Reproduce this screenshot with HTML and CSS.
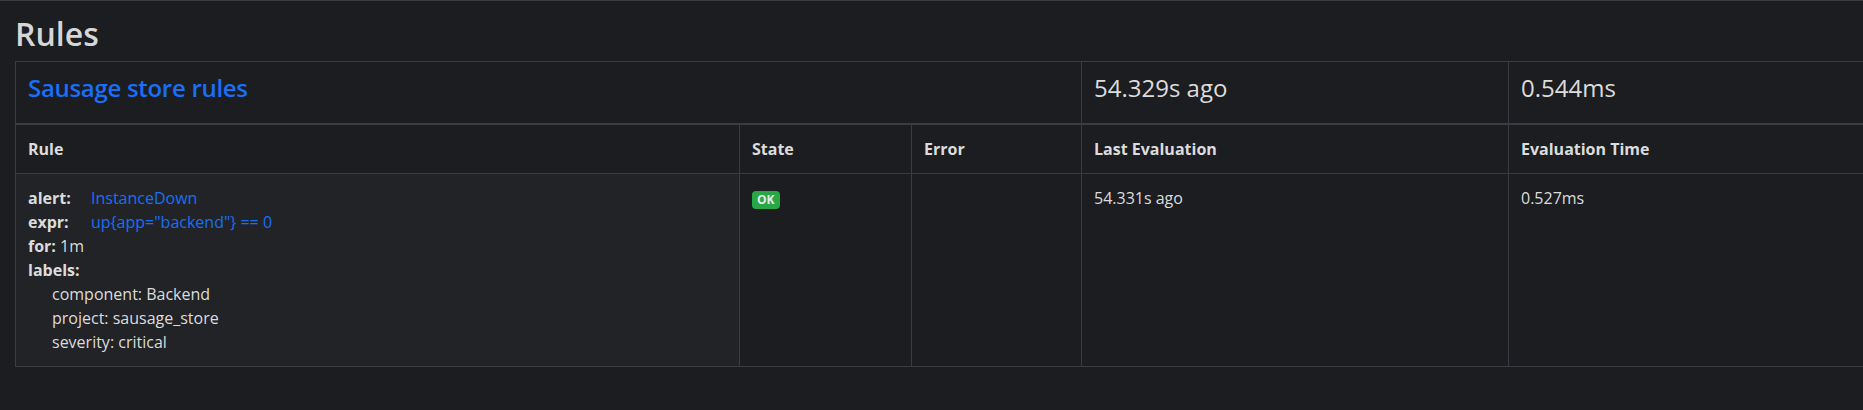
FILE: index.html
```html
<!DOCTYPE html>
<html lang="en">
<head>
<meta charset="utf-8">
<title>Rules</title>
<link rel="stylesheet" href="styles.css">
</head>
<body>
<div class="topbar"></div>
<main class="container">
  <h2 class="title">Rules</h2>
  <table class="rules">
    <colgroup>
      <col class="c-rule"><col class="c-state"><col class="c-error"><col class="c-last"><col class="c-time">
    </colgroup>
    <thead>
      <tr class="group-row">
        <td colspan="3"><h4 class="group-title"><a href="#" class="link group-link">Sausage store rules</a></h4></td>
        <td><h4 class="group-title">54.329s ago</h4></td>
        <td><h4 class="group-title">0.544ms</h4></td>
      </tr>
    </thead>
    <tbody>
      <tr class="head-row">
        <td>Rule</td>
        <td>State</td>
        <td>Error</td>
        <td>Last Evaluation</td>
        <td>Evaluation Time</td>
      </tr>
      <tr class="data-row">
        <td class="rule-cell">
          <div class="kv"><b class="key">alert:</b><a href="#" class="link">InstanceDown</a></div>
          <div class="kv"><b class="key">expr:</b><a href="#" class="link">up{app="backend"} == 0</a></div>
          <div><b>for:</b> 1m</div>
          <div><b>labels:</b></div>
          <div class="label">component: Backend</div>
          <div class="label">project: sausage_store</div>
          <div class="label">severity: critical</div>
        </td>
        <td><span class="badge">OK</span></td>
        <td></td>
        <td>54.331s ago</td>
        <td>0.527ms</td>
      </tr>
    </tbody>
  </table>
</main>
</body>
</html>
```

FILE: styles.css
```css
html, body {
  margin: 0;
  padding: 0;
  overflow: hidden;
  background: #1b1d21;
}
body {
  font-family: "Open Sans", "Noto Sans", sans-serif;
  font-size: 16px;
  line-height: 1.5;
  color: #dcdcdc;
  height: 410px;
}
.topbar {
  height: 1px;
  background: #3a3d42;
}
.container {
  padding: 14px 15px 0;
  width: 2000px;
}
.title {
  margin: 0 0 8px;
  font-size: 32px;
  font-weight: 560;
  line-height: 1.2;
  color: #d6d6d6;
}
.rules {
  border-collapse: collapse;
  table-layout: fixed;
  width: 1920px;
}
.c-rule { width: 724px; }
.c-state { width: 172px; }
.c-error { width: 170px; }
.c-last { width: 427px; }
.c-time { width: 427px; }
.rules td {
  border: 1px solid #3a3c41;
  padding: 12px;
  vertical-align: top;
  text-align: left;
}
.group-row td {
  border-bottom-width: 2px;
}
.group-title {
  margin: 0 0 8px;
  font-size: 24px;
  font-weight: 520;
  line-height: 1.2;
}
.group-link {
  font-weight: 580;
  letter-spacing: -0.3px;
}
.link {
  color: #1a6ff5;
  text-decoration: none;
}
.head-row td {
  font-weight: 700;
  font-size: 16px;
}
.rule-cell {
  background: #212327;
}
.kv {
  display: flex;
}
.key {
  width: 63px;
  flex: none;
}
.label {
  padding-left: 24px;
}
.badge {
  display: inline-block;
  background: #28a745;
  color: #e8e8e8;
  font-size: 12px;
  font-weight: 700;
  line-height: 1;
  padding: 3px 5px;
  border-radius: 4px;
  vertical-align: baseline;
}
```
